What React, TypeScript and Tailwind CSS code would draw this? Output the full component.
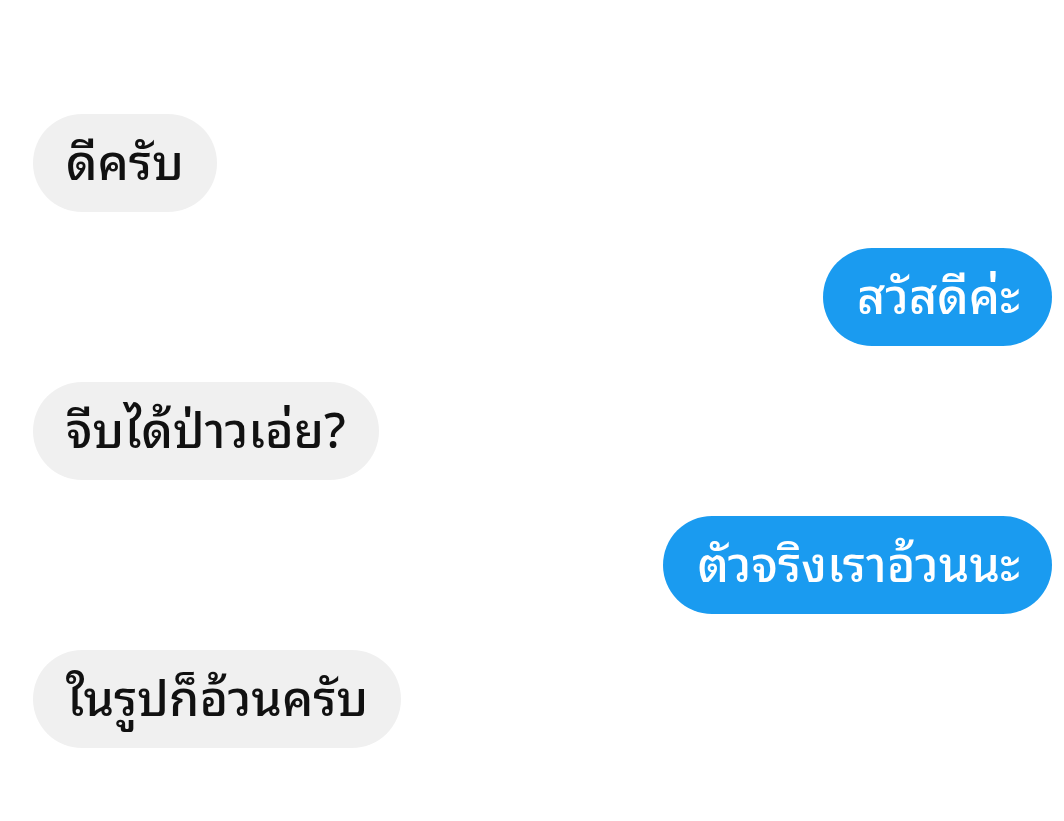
import React from "react";

type Msg = { text: string; mine: boolean };

const messages: Msg[] = [
  { text: "ดีครับ", mine: false },
  { text: "สวัสดีค่ะ", mine: true },
  { text: "จีบได้ป่าวเอ่ย?", mine: false },
  { text: "ตัวจริงเราอ้วนนะ", mine: true },
  { text: "ในรูปก็อ้วนครับ", mine: false },
];

const Bubble = ({ text, mine }: Msg) => (
  <div className={mine ? "flex justify-end" : "flex justify-start"}>
    <div
      className={
        mine
          ? "h-[98px] flex items-center rounded-full bg-[#1a9bf0] pl-[34px] pr-[32px] pb-[10px] text-white"
          : "h-[98px] flex items-center rounded-full bg-[#f0f0f0] pl-[33px] pr-[33px] pb-[10px] text-[#111]"
      }
    >
      <span className="text-[48.5px] leading-none font-medium">{text}</span>
    </div>
  </div>
);

export default function App() {
  return (
    <div className="w-[1064px] h-[821px] bg-white overflow-hidden font-['Noto_Sans_Thai_Looped','Noto_Sans',sans-serif]">
      <div className="flex flex-col gap-[36px] pt-[114px] pl-[33px] pr-[12px]">
        {messages.map((m, i) => (
          <Bubble key={i} {...m} />
        ))}
      </div>
    </div>
  );
}
